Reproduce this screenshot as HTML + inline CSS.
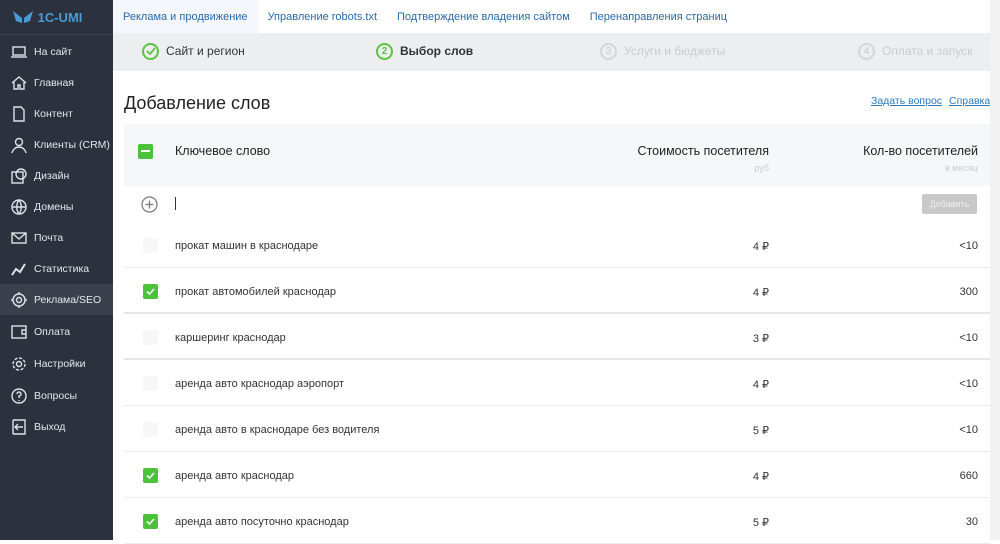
<!DOCTYPE html>
<html><head><meta charset="utf-8"><style>
*{box-sizing:border-box;margin:0;padding:0}
body{width:1000px;height:540px;overflow:hidden;font-family:"Liberation Sans","DejaVu Sans",sans-serif;background:#fff;position:relative}
.sb{position:absolute;left:0;top:0;width:113px;height:540px;background:#2c323d;color:#e3e6ea}
.logo{height:35px;border-bottom:1px solid #3c4350;display:flex;align-items:center;padding-left:12px;color:#4a9ad6;font-weight:bold;font-size:13px}
.it{position:absolute;left:0;width:113px;height:31px;display:flex;align-items:center;font-size:10.5px;white-space:nowrap}
.it svg{position:absolute;left:10px;width:18px;height:18px}
.it span{position:absolute;left:34px}
.act{background:#3a404c}
.tabs{position:absolute;left:113px;top:0;right:0;height:35px;display:flex;align-items:center;font-size:11px;color:#2a6aa8}
.tabs div{padding:0 10px;height:35px;line-height:35px}
.tabs .a{background:#f3f7fb}
.steps{position:absolute;left:113px;top:33px;width:887px;height:38px;background:#eceeef;font-size:12px;color:#333}
.st{position:absolute;top:0;height:36px;display:flex;align-items:center}
.c{width:17px;height:17px;border:2px solid #5cc443;border-radius:50%;margin-right:7px;font-size:10px;display:flex;align-items:center;justify-content:center;color:#5cc443;font-weight:bold}
.g{color:#c9ccce}.g .c{border-color:#d4d6d8;color:#c9ccce;font-weight:normal}
h1{position:absolute;left:124px;top:93px;font-size:18px;font-weight:normal;color:#222}
.lk{position:absolute;top:95px;font-size:10.5px;color:#2a7bc0;text-decoration:underline;white-space:nowrap}
.hd{position:absolute;left:124px;top:124px;width:866px;height:62px;background:#f6f7f8}
.cb{position:absolute;width:15px;height:15px;border-radius:2px}
.on{background:#4cc23a}
.off{background:#f7f7f7}
.row{position:absolute;left:124px;width:866px;height:46px;border-bottom:1px solid #ececec;font-size:11px;color:#333}
.row .k{position:absolute;left:51px;top:18px}
.row .p{position:absolute;right:221px;top:18px}
.row .n{position:absolute;right:12px;top:18px}
.row .cb{left:19px;top:16px}
.scr{position:absolute;left:990px;top:0;width:10px;height:540px;background:#f2f2f2}
</style></head><body>
<div class="sb">
<div class="logo"><svg width="22" height="16" viewBox="0 0 22 16"><path d="M1 2 L10 9 L10 14 L4 12 Z M21 2 L12 9 L12 14 L18 12 Z" fill="#4a9ad6"/></svg>&nbsp;1C-UMI</div>
<div class="it" style="top:36px"><svg viewBox="0 0 18 18" fill="none" stroke="#dfe2e6" stroke-width="1.4"><rect x="3" y="4" width="12" height="8"/><path d="M1 14h16"/></svg><span>На сайт</span></div>
<div class="it" style="top:67px"><svg viewBox="0 0 18 18" fill="none" stroke="#dfe2e6" stroke-width="1.4"><path d="M2 9L9 3l7 6M4 8v7h4v-4h2v4h4V8"/></svg><span>Главная</span></div>
<div class="it" style="top:98px"><svg viewBox="0 0 18 18" fill="none" stroke="#dfe2e6" stroke-width="1.4"><path d="M4 2h7l3 3v11H4z"/></svg><span>Контент</span></div>
<div class="it" style="top:129px"><svg viewBox="0 0 18 18" fill="none" stroke="#dfe2e6" stroke-width="1.4"><circle cx="9" cy="6" r="3.5"/><path d="M2 17c1-4 4-6 7-6s6 2 7 6"/></svg><span>Клиенты (CRM)</span></div>
<div class="it" style="top:160px"><svg viewBox="0 0 18 18" fill="none" stroke="#dfe2e6" stroke-width="1.4"><rect x="2" y="5" width="11" height="11"/><circle cx="11" cy="7" r="5"/></svg><span>Дизайн</span></div>
<div class="it" style="top:191px"><svg viewBox="0 0 18 18" fill="none" stroke="#dfe2e6" stroke-width="1.4"><circle cx="9" cy="9" r="7"/><path d="M2 9h14M9 2c-3 4-3 10 0 14M9 2c3 4 3 10 0 14"/></svg><span>Домены</span></div>
<div class="it" style="top:222px"><svg viewBox="0 0 18 18" fill="none" stroke="#dfe2e6" stroke-width="1.4"><rect x="2" y="4" width="14" height="10"/><path d="M2 4l7 6 7-6"/></svg><span>Почта</span></div>
<div class="it" style="top:253px"><svg viewBox="0 0 18 18" fill="none" stroke="#dfe2e6" stroke-width="2"><path d="M2 15l4-6 4 3 5-8"/></svg><span>Статистика</span></div>
<div class="it act" style="top:284px"><svg viewBox="0 0 18 18" fill="none" stroke="#dfe2e6" stroke-width="1.4"><circle cx="9" cy="9" r="6"/><circle cx="9" cy="9" r="2.5"/><path d="M9 1v2M9 15v2M1 9h2M15 9h2"/></svg><span>Реклама/SEO</span></div>
<div class="it" style="top:316px"><svg viewBox="0 0 18 18" fill="none" stroke="#dfe2e6" stroke-width="1.4"><rect x="2" y="3" width="14" height="12"/><path d="M16 7h-4v4h4"/></svg><span>Оплата</span></div>
<div class="it" style="top:348px"><svg viewBox="0 0 18 18" fill="none" stroke="#dfe2e6" stroke-width="1.4"><circle cx="9" cy="9" r="2.5"/><circle cx="9" cy="9" r="6" stroke-dasharray="3 1.7"/></svg><span>Настройки</span></div>
<div class="it" style="top:380px"><svg viewBox="0 0 18 18" fill="none" stroke="#dfe2e6" stroke-width="1.4"><circle cx="9" cy="9" r="7"/><path d="M7 7a2 2 0 1 1 2 2v2M9 13v1"/></svg><span>Вопросы</span></div>
<div class="it" style="top:411px"><svg viewBox="0 0 18 18" fill="none" stroke="#dfe2e6" stroke-width="1.4"><path d="M3 2h12v14H3M3 2v14M13 9H6M8 6L5 9l3 3"/></svg><span>Выход</span></div>
</div>
<div class="tabs"><div class="a">Реклама и продвижение</div><div>Управление robots.txt</div><div>Подтверждение владения сайтом</div><div>Перенаправления страниц</div></div>
<div class="steps">
<div class="st" style="left:29px"><div class="c"><svg width="10" height="8" viewBox="0 0 10 8"><path d="M1 4l3 3 5-6" fill="none" stroke="#5cc443" stroke-width="1.8"/></svg></div>Сайт и регион</div>
<div class="st" style="left:263px;font-weight:bold"><div class="c">2</div>Выбор слов</div>
<div class="st g" style="left:487px"><div class="c">3</div>Услуги и бюджеты</div>
<div class="st g" style="left:745px"><div class="c">4</div>Оплата и запуск</div>
</div>
<h1>Добавление слов</h1>
<div class="lk" style="left:871px">Задать вопрос</div><div class="lk" style="left:949px">Справка</div>
<div class="hd">
<div class="cb on" style="left:14px;top:20px"><div style="position:absolute;left:3px;top:6px;width:9px;height:2px;background:#fff"></div></div>
<div style="position:absolute;left:51px;top:20px;font-size:12.5px;color:#222">Ключевое слово</div>
<div style="position:absolute;right:221px;top:20px;font-size:12.5px;color:#222">Стоимость посетителя</div>
<div style="position:absolute;right:221px;top:39px;font-size:9px;color:#ccc">руб</div>
<div style="position:absolute;right:12px;top:20px;font-size:12.5px;color:#222">Кол-во посетителей</div>
<div style="position:absolute;right:12px;top:39px;font-size:9px;color:#ccc">в месяц</div>
</div>
<svg style="position:absolute;left:141px;top:196px" width="17" height="17" viewBox="0 0 17 17" fill="none" stroke="#777" stroke-width="1.2"><circle cx="8.5" cy="8.5" r="7.5"/><path d="M8.5 4.5v8M4.5 8.5h8"/></svg>
<div style="position:absolute;left:175px;top:197px;width:1px;height:13px;background:#333"></div>
<div style="position:absolute;left:922px;top:194px;width:55px;height:20px;background:#c8c8c8;border-radius:2px;color:#eee;font-size:9px;text-align:center;line-height:20px">Добавить</div>
<div class="row" style="top:222px"><div class="cb off"></div><div class="k">прокат машин в краснодаре</div><div class="p">4 ₽</div><div class="n">&lt;10</div></div>
<div class="row" style="top:268px;border-bottom:2px solid #e6e6e6"><div class="cb on"><svg width="15" height="15" viewBox="0 0 15 15"><path d="M4 7.5l2.5 2.5 4.5-5" fill="none" stroke="#fff" stroke-width="1.6"/></svg></div><div class="k">прокат автомобилей краснодар</div><div class="p">4 ₽</div><div class="n">300</div></div>
<div class="row" style="top:314px;border-bottom:2px solid #e6e6e6"><div class="cb off"></div><div class="k">каршеринг краснодар</div><div class="p">3 ₽</div><div class="n">&lt;10</div></div>
<div class="row" style="top:360px"><div class="cb off"></div><div class="k">аренда авто краснодар аэропорт</div><div class="p">4 ₽</div><div class="n">&lt;10</div></div>
<div class="row" style="top:406px"><div class="cb off"></div><div class="k">аренда авто в краснодаре без водителя</div><div class="p">5 ₽</div><div class="n">&lt;10</div></div>
<div class="row" style="top:452px"><div class="cb on"><svg width="15" height="15" viewBox="0 0 15 15"><path d="M4 7.5l2.5 2.5 4.5-5" fill="none" stroke="#fff" stroke-width="1.6"/></svg></div><div class="k">аренда авто краснодар</div><div class="p">4 ₽</div><div class="n">660</div></div>
<div class="row" style="top:498px"><div class="cb on"><svg width="15" height="15" viewBox="0 0 15 15"><path d="M4 7.5l2.5 2.5 4.5-5" fill="none" stroke="#fff" stroke-width="1.6"/></svg></div><div class="k">аренда авто посуточно краснодар</div><div class="p">5 ₽</div><div class="n">30</div></div>
<div class="scr"></div>
</body></html>
